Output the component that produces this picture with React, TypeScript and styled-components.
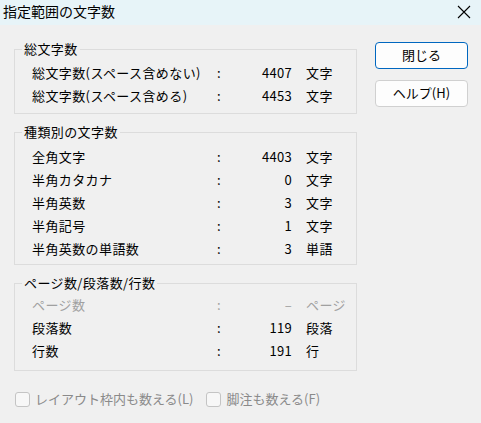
import React from "react";
import styled, { createGlobalStyle } from "styled-components";

const Global = createGlobalStyle`
  html, body { margin: 0; padding: 0; background: #f0f0f0; }
  body { font-family: "Noto Sans CJK JP", "Noto Sans", sans-serif; font-size: 13px; color: #000; }
`;

const Window = styled.div`
  width: 481px;
  height: 423px;
  background: #f0f0f0;
  display: flex;
  flex-direction: column;
  overflow: hidden;
`;

const TitleBar = styled.div`
  height: 25px;
  flex: none;
  background: #e7f4f8;
  display: flex;
  align-items: center;
  justify-content: space-between;
  padding: 0 10px 0 3px;
`;

const Title = styled.span`
  font-size: 14px;
  line-height: 25px;
  padding-bottom: 2px;
`;

const CloseIcon = styled.svg`
  width: 14px;
  height: 14px;
  margin-top: -2px;
`;

const Body = styled.div`
  display: flex;
  padding: 15px 0 0 14px;
`;

const Groups = styled.div`
  width: 343px;
  display: flex;
  flex-direction: column;
  gap: 9px;
`;

const Group = styled.fieldset<{ $pt: number; $pb: number }>`
  margin: 0;
  padding: ${(p) => p.$pt}px 0 ${(p) => p.$pb}px 17px;
  border: 1px solid #dcdcdc;
  min-width: 0;
`;

const Legend = styled.legend`
  padding: 0 2px;
  margin-left: -10px;
  line-height: 18px;
  font-size: 13px;
  letter-spacing: 0.4px;
`;

const Row = styled.div<{ $disabled?: boolean }>`
  display: grid;
  grid-template-columns: 185px 10px 65px 14px auto;
  height: 23px;
  line-height: 23px;
  color: ${(p) => (p.$disabled ? "#a0a0a0" : "#000")};
`;

const Label = styled.span`
  white-space: nowrap;
  letter-spacing: 0.4px;
`;

const Colon = styled.span``;

const Num = styled.span`
  text-align: right;
  letter-spacing: 0.3px;
`;

const Unit = styled.span`
  grid-column: 5;
  white-space: nowrap;
  letter-spacing: 0.4px;
`;

const Buttons = styled.div`
  display: flex;
  flex-direction: column;
  gap: 11px;
  margin-left: 18px;
  padding-top: 2px;
`;

const Button = styled.button<{ $primary?: boolean }>`
  width: 93px;
  height: 27px;
  box-sizing: border-box;
  border-radius: 4px;
  border: 1px solid ${(p) => (p.$primary ? "#0067c0" : "#d0d0d0")};
  background: #fdfdfd;
  font-family: "Noto Sans CJK JP", "Noto Sans", sans-serif;
  font-size: 13px;
  color: #000;
  padding: 0 0 1px;
  line-height: 24px;
`;

const Footer = styled.div`
  display: flex;
  align-items: center;
  gap: 13px;
  padding: 19px 0 0 15px;
`;

const Check = styled.label`
  display: flex;
  align-items: center;
  gap: 5px;
  color: #8a8a8a;
  line-height: 18px;
`;

const Box = styled.span`
  width: 15px;
  height: 15px;
  box-sizing: border-box;
  border: 1px solid #c4c4c4;
  border-radius: 3px;
  background: #f7f7f7;
  flex: none;
`;

type RowData = { label: string; num: string; unit: string; disabled?: boolean };

const group1: RowData[] = [
  { label: "総文字数(スペース含めない)", num: "4407", unit: "文字" },
  { label: "総文字数(スペース含める)", num: "4453", unit: "文字" },
];
const group2: RowData[] = [
  { label: "全角文字", num: "4403", unit: "文字" },
  { label: "半角カタカナ", num: "0", unit: "文字" },
  { label: "半角英数", num: "3", unit: "文字" },
  { label: "半角記号", num: "1", unit: "文字" },
  { label: "半角英数の単語数", num: "3", unit: "単語" },
];
const group3: RowData[] = [
  { label: "ページ数", num: "–", unit: "ページ", disabled: true },
  { label: "段落数", num: "119", unit: "段落" },
  { label: "行数", num: "191", unit: "行" },
];

const Rows = ({ rows }: { rows: RowData[] }) => (
  <>
    {rows.map((r) => (
      <Row key={r.label} $disabled={r.disabled}>
        <Label>{r.label}</Label>
        <Colon>:</Colon>
        <Num>{r.num}</Num>
        <Unit>{r.unit}</Unit>
      </Row>
    ))}
  </>
);

export default function App() {
  return (
    <Window>
      <Global />
      <TitleBar>
        <Title>指定範囲の文字数</Title>
        <CloseIcon viewBox="0 0 14 14">
          <path d="M1 1 L13 13 M13 1 L1 13" stroke="#000" strokeWidth="1.1" fill="none" />
        </CloseIcon>
      </TitleBar>
      <Body>
        <Groups>
          <Group $pt={3} $pb={6}>
            <Legend>総文字数</Legend>
            <Rows rows={group1} />
          </Group>
          <Group $pt={4} $pb={4}>
            <Legend>種類別の文字数</Legend>
            <Rows rows={group2} />
          </Group>
          <Group $pt={1} $pb={8}>
            <Legend>ページ数/段落数/行数</Legend>
            <Rows rows={group3} />
          </Group>
        </Groups>
        <Buttons>
          <Button $primary>閉じる</Button>
          <Button>ヘルプ(H)</Button>
        </Buttons>
      </Body>
      <Footer>
        <Check>
          <Box />
          レイアウト枠内も数える(L)
        </Check>
        <Check>
          <Box />
          脚注も数える(F)
        </Check>
      </Footer>
    </Window>
  );
}
